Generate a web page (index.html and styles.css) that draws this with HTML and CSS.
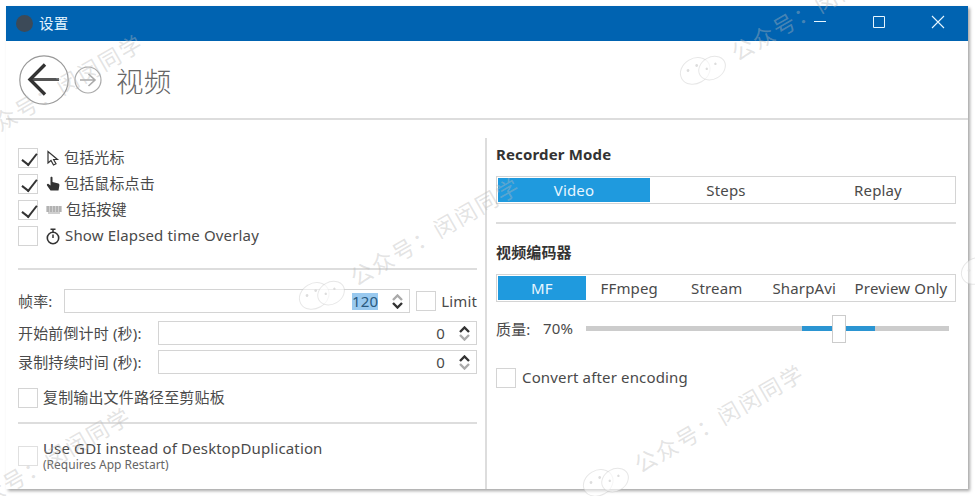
FILE: index.html
```html
<!DOCTYPE html>
<html lang="zh-CN">
<head>
  <meta charset="UTF-8">
  <title>设置</title>
  <link rel="stylesheet" href="styles.css">
</head>
<body>
  <div class="window">
    <!-- Title bar -->
    <div class="titlebar">
      <span class="app-dot"></span>
      <span class="app-name">设置</span>
      <div class="win-buttons">
        <svg width="14" height="14" viewBox="0 0 14 14"><path d="M1 6.5H13" stroke="#e6f6ff" fill="none"/></svg>
        <svg width="14" height="14" viewBox="0 0 14 14"><path d="M1.5 1.5H12.5V12.5H1.5Z" stroke="#e6f6ff" fill="none"/></svg>
        <svg width="14" height="14" viewBox="0 0 14 14"><path d="M1 1L13 13M13 1L1 13" stroke="#e6f6ff" stroke-width="1.1" fill="none"/></svg>
      </div>
    </div>

    <!-- Page header -->
    <div class="page-header">
      <svg class="nav-back" width="50" height="50" viewBox="0 0 50 50">
        <circle cx="25" cy="25" r="24.2" fill="none" stroke="#999" stroke-width="1.2"/>
        <path d="M12 24.5H40" fill="none" stroke="#555" stroke-width="3"/>
        <path d="M26 9.5L11 24.5L26 39.5" fill="none" stroke="#333" stroke-width="3.4"/>
      </svg>
      <svg class="nav-forward" width="28" height="28" viewBox="0 0 28 28">
        <circle cx="14" cy="14" r="13" fill="none" stroke="#aaa" stroke-width="1.2"/>
        <path d="M6 14H21M14.5 8L21 14L14.5 20" fill="none" stroke="#aaa" stroke-width="1.6"/>
      </svg>
      <h1 class="page-title">视频</h1>
    </div>

    <div class="content">
      <!-- Left column -->
      <div class="col-left">
        <div class="check-list">
          <div class="check-row">
            <span class="box checked"></span>
            <svg class="row-icon" width="14" height="16" viewBox="0 0 14 16"><path d="M2 1.5V13L5 10.5L7.5 15L10 13.7L7.6 9.5H11.5Z" fill="#fff" stroke="#333" stroke-width="1.2"/></svg>
            <span>包括光标</span>
          </div>
          <div class="check-row">
            <span class="box checked"></span>
            <svg class="row-icon" width="14" height="16" viewBox="0 0 14 16"><path d="M4.5 1.5C4.5 .5 6.5 .5 6.5 1.5V6L12.5 7.5C13.5 8 13.5 9 13.3 10L12.5 14.5H4.5L1 9.5C.5 8.5 1.5 7.5 2.5 8L4.5 9.5Z" fill="#333"/></svg>
            <span>包括鼠标点击</span>
          </div>
          <div class="check-row">
            <span class="box checked"></span>
            <svg class="row-icon" width="16" height="9" viewBox="0 0 16 9"><path d="M0 1H16M0 3H16M0 5H16M2 7H14M2 0V6M5 0V6M8 0V6M11 0V6M14 0V6" stroke="#888" stroke-width=".8" fill="none"/></svg>
            <span>包括按键</span>
          </div>
          <div class="check-row">
            <span class="box"></span>
            <svg class="row-icon timer" width="14" height="17" viewBox="0 0 14 17"><circle cx="7" cy="10" r="5.7" fill="none" stroke="#333" stroke-width="1.6"/><path d="M4.5 1.2H9.5M7 1.2V4M7 10V6.5" stroke="#333" stroke-width="1.5" fill="none"/></svg>
            <span>Show Elapsed time Overlay</span>
          </div>
        </div>

        <hr class="rule rule-a">

        <div class="field-row">
          <label class="fps-label">帧率:</label>
          <div class="spin">
            <span class="selected">120</span>
            <span class="arrows">
              <svg width="11" height="7" viewBox="0 0 11 7"><path d="M1 6L5.5 1.5L10 6" fill="none" stroke="#aaa" stroke-width="2.4"/></svg>
              <svg width="11" height="7" viewBox="0 0 11 7"><path d="M1 1L5.5 5.5L10 1" fill="none" stroke="#333" stroke-width="2.4"/></svg>
            </span>
          </div>
          <span class="box"></span>
          <span class="limit">Limit</span>
        </div>
        <div class="field-row count-row">
          <label class="long-label">开始前倒计时 (秒):</label>
          <div class="spin">
            <span>0</span>
            <span class="arrows">
              <svg width="11" height="7" viewBox="0 0 11 7"><path d="M1 6L5.5 1.5L10 6" fill="none" stroke="#333" stroke-width="2.4"/></svg>
              <svg width="11" height="7" viewBox="0 0 11 7"><path d="M1 1L5.5 5.5L10 1" fill="none" stroke="#aaa" stroke-width="2.4"/></svg>
            </span>
          </div>
        </div>
        <div class="field-row tight">
          <label class="long-label">录制持续时间 (秒):</label>
          <div class="spin">
            <span>0</span>
            <span class="arrows">
              <svg width="11" height="7" viewBox="0 0 11 7"><path d="M1 6L5.5 1.5L10 6" fill="none" stroke="#333" stroke-width="2.4"/></svg>
              <svg width="11" height="7" viewBox="0 0 11 7"><path d="M1 1L5.5 5.5L10 1" fill="none" stroke="#aaa" stroke-width="2.4"/></svg>
            </span>
          </div>
        </div>

        <div class="check-row copy-row">
          <span class="box"></span>
          <span>复制输出文件路径至剪贴板</span>
        </div>

        <hr class="rule rule-b">

        <div class="check-row gdi-row">
          <span class="box"></span>
          <div class="gdi-text">
            <div class="gdi-title">Use GDI instead of DesktopDuplication</div>
            <div class="hint">(Requires App Restart)</div>
          </div>
        </div>
      </div>

      <!-- Right column -->
      <div class="col-right">
        <h2 class="section-title">Recorder Mode</h2>
        <div class="segments modes">
          <span class="seg active">Video</span>
          <span class="seg">Steps</span>
          <span class="seg">Replay</span>
        </div>

        <hr class="rule rule-c">

        <h2 class="section-title">视频编码器</h2>
        <div class="segments encoders">
          <span class="seg active">MF</span>
          <span class="seg">FFmpeg</span>
          <span class="seg">Stream</span>
          <span class="seg">SharpAvi</span>
          <span class="seg">Preview Only</span>
        </div>

        <div class="quality-row">
          <span class="quality-label">质量:</span>
          <span class="quality-value">70%</span>
          <div class="slider">
            <div class="slider-fill"></div>
            <div class="slider-thumb"></div>
          </div>
        </div>

        <div class="check-row convert-row">
          <span class="box"></span>
          <span>Convert after encoding</span>
        </div>
      </div>
    </div>
  </div>

  <!-- Watermarks over the screenshot -->
  <div class="marks">
    <div class="mark mark-a">
      <svg class="bubbles" width="50" height="34" viewBox="0 0 50 34"><use href="#wechat"/></svg>
      <span>公众号：闵闵同学</span>
    </div>
    <div class="mark mark-b">
      <svg class="bubbles" width="50" height="34" viewBox="0 0 50 34"><use href="#wechat"/></svg>
      <span>公众号：闵闵同学</span>
    </div>
    <div class="mark mark-c">
      <svg class="bubbles" width="50" height="34" viewBox="0 0 50 34"><use href="#wechat"/></svg>
      <span>公众号：闵闵同学</span>
    </div>
    <div class="mark mark-d">
      <svg class="bubbles" width="50" height="34" viewBox="0 0 50 34"><use href="#wechat"/></svg>
      <span>公众号：闵闵同学</span>
    </div>
    <div class="mark mark-e">
      <svg class="bubbles" width="50" height="34" viewBox="0 0 50 34"><use href="#wechat"/></svg>
      <span>公众号：闵闵同学</span>
    </div>
    <div class="mark mark-f">
      <svg class="bubbles" width="50" height="34" viewBox="0 0 50 34"><use href="#wechat"/></svg>
    </div>
  </div>

  <svg class="defs" width="0" height="0">
    <defs>
      <g id="wechat">
        <ellipse cx="17" cy="14" rx="15.5" ry="12.5" fill="#fff" fill-opacity=".5" stroke="#bbb" stroke-opacity=".35"/>
        <ellipse cx="33" cy="20" rx="14" ry="11" fill="#fff" fill-opacity=".6" stroke="#bbb" stroke-opacity=".35"/>
        <circle cx="11" cy="10" r="1.4" fill="#ddd"/>
        <circle cx="21" cy="10" r="1.4" fill="#ddd"/>
        <circle cx="28" cy="18" r="1.2" fill="#ddd"/>
        <circle cx="38" cy="18" r="1.2" fill="#ddd"/>
      </g>
    </defs>
  </svg>
</body>
</html>
```

FILE: styles.css
```css
* {
  box-sizing: border-box;
}

html, body {
  margin: 0;
  height: 100%;
  background: #fff;
  overflow: hidden;
}

body {
  position: relative;
  padding: 6px 7px 7px 6px;
  font-family: "Noto Sans", "Noto Sans CJK SC", sans-serif;
  font-size: 15px;
  letter-spacing: 0.15px;
  color: #4a4a4a;
}

.window {
  height: 483px;
  background: #fff;
  box-shadow: 2px 2px 3px rgba(0, 0, 0, 0.35);
  display: flex;
  flex-direction: column;
}

/* Title bar */
.titlebar {
  height: 35px;
  background: #0063b1;
  display: flex;
  align-items: center;
  padding-left: 10px;
  color: #e6f6ff;
  font-size: 14.5px;
  flex: none;
}

.app-dot {
  width: 17px;
  height: 17px;
  border-radius: 50%;
  background: #3c4a58;
  margin-right: 6px;
}

.app-name {
  margin-bottom: 3px;
}

.win-buttons {
  margin-left: auto;
  display: flex;
  gap: 45px;
  padding-right: 23px;
  padding-bottom: 3px;
}

/* Page header */
.page-header {
  height: 79px;
  flex: none;
  border-bottom: 2px solid #ddd;
  display: flex;
  align-items: center;
  padding-left: 13px;
}

.nav-forward {
  margin-left: 5px;
}

.page-title {
  margin: 0 0 0 14px;
  font-size: 27.5px;
  font-weight: 300;
  color: #666;
}

/* Columns */
.content {
  flex: 1;
  display: flex;
  min-height: 0;
  padding-top: 18px;
}

.col-left {
  width: 481px;
  padding: 10px 8px 0 12px;
  border-right: 2px solid #ddd;
}

.col-right {
  flex: 1;
  padding: 6px 12px 0 9px;
}

.rule {
  border: 0;
  border-top: 2px solid #ddd;
  margin: 0;
}

.box {
  flex: none;
  width: 20px;
  height: 20px;
  border: 1px solid #d4d4d4;
  background: #fff;
  position: relative;
}

.box.checked::after {
  content: "";
  position: absolute;
  left: 6px;
  top: 1px;
  width: 7px;
  height: 13px;
  border: solid #333;
  border-width: 0 2.6px 2.6px 0;
  transform: rotate(38deg);
}

.check-list {
  display: flex;
  flex-direction: column;
  gap: 6px;
}

.check-row {
  display: flex;
  align-items: center;
  height: 20px;
  white-space: nowrap;
}

.check-row > span:not(.box) {
  margin-bottom: 3px;
}

.check-row > .box {
  margin-right: 6px;
}

.row-icon {
  margin: 0 4px 0 2px;
  flex: none;
}

.row-icon.timer {
  margin-right: 5px;
}

.rule-a {
  margin: 22px 0 19px;
}

/* Number fields */
.field-row {
  display: flex;
  align-items: center;
  height: 24px;
}

.field-row.count-row {
  margin-top: 8px;
}

.field-row.tight {
  margin-top: 5px;
}

.field-row label {
  margin-bottom: 2px;
}

.fps-label {
  width: 46px;
  flex: none;
}

.long-label {
  width: 140px;
  flex: none;
  white-space: nowrap;
}

.spin {
  flex: 1;
  height: 24px;
  border: 1px solid #d4d4d4;
  display: flex;
  align-items: center;
  justify-content: flex-end;
}

.selected {
  background: #99c9ef;
  color: #2a5a80;
  line-height: 17px;
}

.arrows {
  width: 31px;
  flex: none;
  display: flex;
  flex-direction: column;
  align-items: center;
  gap: 1px;
  padding-left: 8px;
}

.field-row > .box {
  margin-left: 6px;
}

.limit {
  margin-left: 5px;
}

.copy-row {
  margin-top: 14px;
}

.copy-row > .box,
.gdi-row > .box {
  margin-right: 5px;
}

.rule-b {
  margin: 14px 0;
}

.gdi-row {
  height: 36px;
}

.gdi-row .box {
  opacity: 0.7;
}

.gdi-text {
  margin-bottom: 3px;
}

.gdi-title {
  line-height: 20px;
}

.hint {
  font-size: 12px;
  line-height: 14px;
  letter-spacing: 0;
  color: #666;
}

/* Right column */
.section-title {
  margin: 0;
  font-size: 15px;
  line-height: 20px;
  font-weight: 700;
  color: #333;
}

.segments {
  display: flex;
  border: 1px solid #d4d4d4;
  height: 28px;
  margin-top: 12px;
  padding: 1px;
}

.seg {
  display: flex;
  align-items: center;
  justify-content: center;
  white-space: nowrap;
}

.seg.active {
  background: #1f9ade;
  color: #e8f6ff;
}

.modes .seg {
  flex: 1;
}

.encoders .seg {
  width: 87.5px;
}

.encoders .seg:last-child {
  width: auto;
  flex: 1;
}

.rule-c {
  margin: 18px 0 18px;
}

.quality-row {
  display: flex;
  align-items: center;
  height: 28px;
  margin-top: 12px;
}

.quality-label {
  width: 47px;
  flex: none;
}

.quality-value {
  width: 43px;
  flex: none;
}

.slider {
  position: relative;
  width: 363px;
  height: 5px;
  background: #ccc;
}

.slider-fill {
  position: absolute;
  left: 216px;
  width: 73px;
  top: 0;
  bottom: 0;
  background: #2b95d2;
}

.slider-thumb {
  position: absolute;
  left: 246px;
  top: -11px;
  width: 14px;
  height: 28px;
  background: #fff;
  border: 1px solid #ccc;
}

.convert-row {
  margin-top: 26px;
}

/* Watermark overlay */
.marks {
  position: absolute;
  top: 0;
  left: 0;
  width: 100%;
  height: 100%;
  overflow: hidden;
  pointer-events: none;
}

.mark {
  position: absolute;
  display: flex;
  align-items: center;
  gap: 8px;
  transform: rotate(-30deg);
  transform-origin: left center;
  font-family: "Noto Sans CJK SC", sans-serif;
  font-size: 22px;
  line-height: 34px;
  letter-spacing: 2px;
  color: rgba(185, 185, 185, 0.4);
  white-space: nowrap;
}

.bubbles {
  flex: none;
}

.mark-a {
  left: -76px;
  top: 147px;
}

.mark-b {
  left: 682px;
  top: 65px;
}

.mark-c {
  left: 301px;
  top: 290px;
}

.mark-d {
  left: -88px;
  top: 520px;
}

.mark-e {
  left: 585px;
  top: 477px;
}

.mark-f {
  left: 963px;
  top: 265px;
}

.defs {
  position: absolute;
}
```
